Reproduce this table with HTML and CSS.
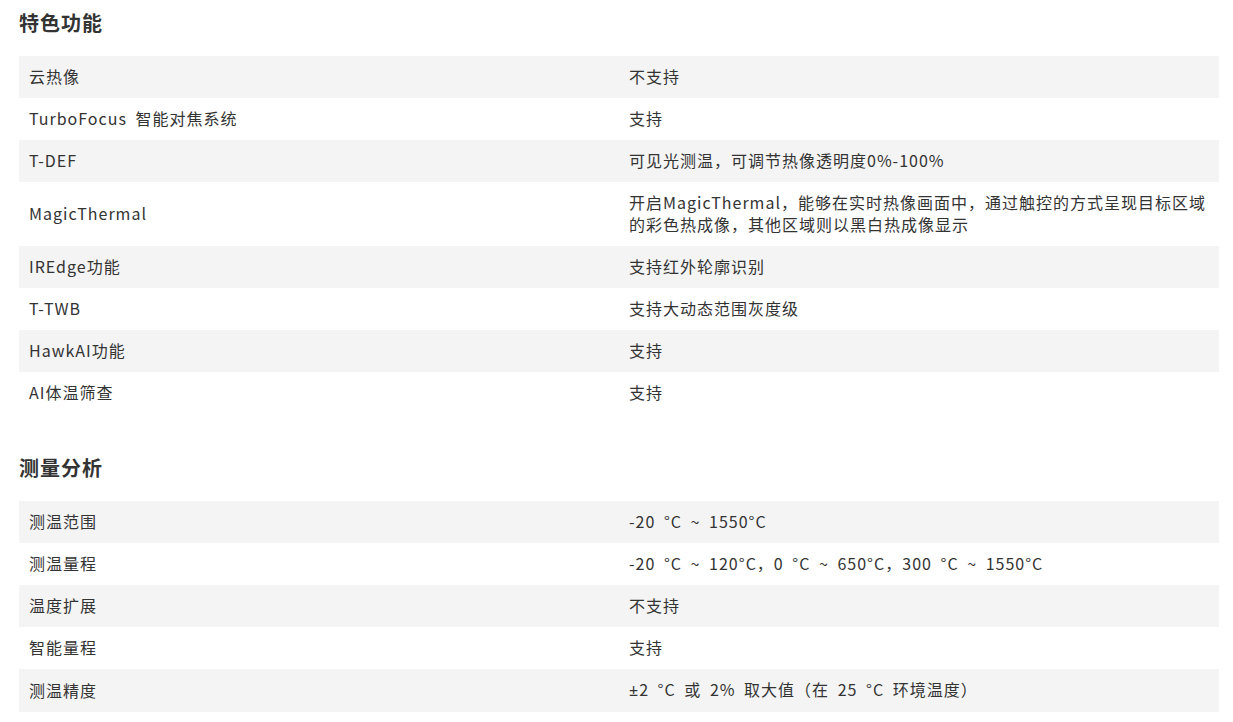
FILE: index.html
```html
<!DOCTYPE html>
<html lang="zh-CN">
<head>
<meta charset="utf-8">
<link rel="stylesheet" href="styles.css">
</head>
<body>
<section class="spec">
  <h2 class="spec-title">特色功能</h2>
  <table class="spec-table">
    <tr><td>云热像</td><td>不支持</td></tr>
    <tr><td>TurboFocus 智能对焦系统</td><td>支持</td></tr>
    <tr><td>T-DEF</td><td>可见光测温，可调节热像透明度0%-100%</td></tr>
    <tr><td>MagicThermal</td><td>开启MagicThermal，能够在实时热像画面中，通过触控的方式呈现目标区域的彩色热成像，其他区域则以黑白热成像显示</td></tr>
    <tr><td>IREdge功能</td><td>支持红外轮廓识别</td></tr>
    <tr><td>T-TWB</td><td>支持大动态范围灰度级</td></tr>
    <tr><td>HawkAI功能</td><td>支持</td></tr>
    <tr><td>AI体温筛查</td><td>支持</td></tr>
  </table>
</section>
<section class="spec">
  <h2 class="spec-title">测量分析</h2>
  <table class="spec-table">
    <tr><td>测温范围</td><td>-20 °C ~ 1550°C</td></tr>
    <tr><td>测温量程</td><td>-20 °C ~ 120°C，0 °C ~ 650°C，300 °C ~ 1550°C</td></tr>
    <tr><td>温度扩展</td><td>不支持</td></tr>
    <tr><td>智能量程</td><td>支持</td></tr>
    <tr><td>测温精度</td><td><span class="latin">±</span>2 °C 或 2% 取大值（在 25 °C 环境温度）</td></tr>
  </table>
</section>
</body>
</html>
```
FILE: styles.css
```css
html, body {
  margin: 0;
  padding: 0;
  background: #fff;
}
body {
  padding: 8px 14px 0 19px;
  font-family: "Noto Sans CJK SC", "Noto Sans", sans-serif;
  color: #333;
}
.spec + .spec {
  margin-top: 39px;
}
.spec-title {
  margin: 0 0 18px;
  font-size: 20px;
  line-height: 30px;
  font-weight: 700;
  letter-spacing: 1px;
  color: #333;
}
.spec-table {
  width: 1200px;
  border-collapse: collapse;
  table-layout: fixed;
  font-size: 16px;
  letter-spacing: 1px;
  word-spacing: 4px;
}
.spec-table td {
  width: 50%;
  padding: 9px 10px 11px;
  line-height: 22px;
  vertical-align: middle;
}
.spec-table tr:nth-child(odd) td {
  background: #f4f4f4;
}
.latin {
  font-family: "Noto Sans", sans-serif;
}
```
